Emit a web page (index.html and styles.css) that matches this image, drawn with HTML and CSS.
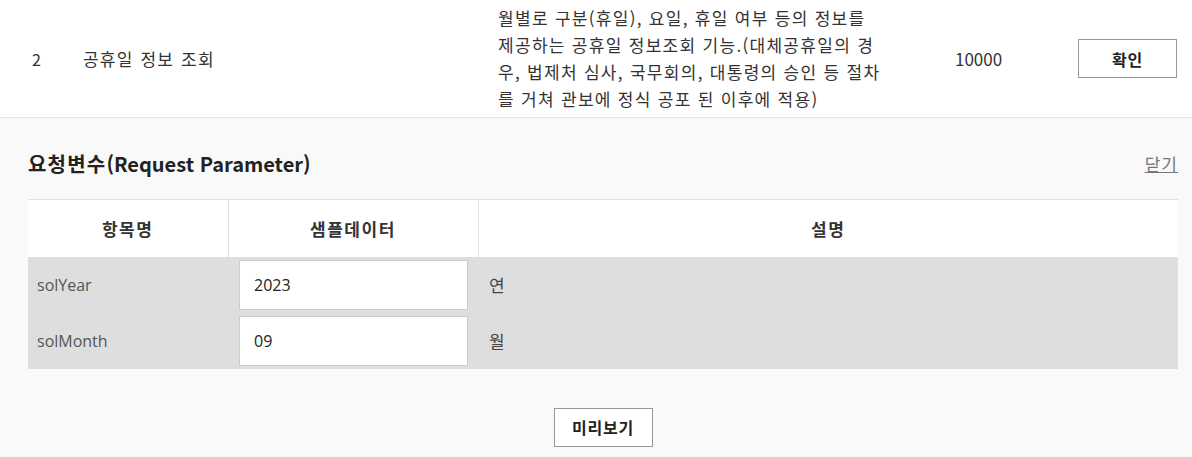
FILE: index.html
```html
<!DOCTYPE html>
<html lang="ko">
<head>
<meta charset="utf-8">
<title>공휴일 정보 조회</title>
<link rel="stylesheet" href="styles.css">
</head>
<body>
<div class="api-row">
  <div class="api-no">2</div>
  <div class="api-name">공휴일 정보 조회</div>
  <div class="api-desc">월별로 구분(휴일), 요일, 휴일 여부 등의 정보를<br>제공하는 공휴일 정보조회 기능.(대체공휴일의 경<br>우, 법제처 심사, 국무회의, 대통령의 승인 등 절차<br>를 거쳐 관보에 정식 공포 된 이후에 적용)</div>
  <div class="api-count">10000</div>
  <div class="api-action"><button class="btn">확인</button></div>
</div>
<section class="panel">
  <div class="panel-head">
    <h2 class="panel-title"><span class="ko">요청변수</span>(Request Parameter)</h2>
    <a class="panel-close" href="#">닫기</a>
  </div>
  <table class="param-table">
    <colgroup>
      <col class="c1"><col class="c2"><col class="c3">
    </colgroup>
    <thead>
      <tr><th>항목명</th><th>샘플데이터</th><th>설명</th></tr>
    </thead>
    <tbody>
      <tr>
        <td class="p-name">solYear</td>
        <td class="p-val"><input class="p-input" type="text" value="2023"></td>
        <td class="p-desc">연</td>
      </tr>
      <tr>
        <td class="p-name">solMonth</td>
        <td class="p-val"><input class="p-input" type="text" value="09"></td>
        <td class="p-desc">월</td>
      </tr>
    </tbody>
  </table>
  <div class="panel-foot"><button class="btn btn-wide">미리보기</button></div>
</section>
</body>
</html>
```
FILE: styles.css
```css
* { box-sizing: border-box; }
html, body { margin: 0; padding: 0; }
body {
  width: 1192px;
  height: 457px;
  overflow: hidden;
  background: #f9f9f9;
  font-family: "Noto Sans CJK KR", "Noto Sans", sans-serif;
  color: #333;
  font-size: 16px;
}
.api-row {
  display: grid;
  grid-template-columns: 51px 415px 457px 123px 99px;
  align-items: center;
  height: 118px;
  padding-left: 32px;
  background: #fff;
  border-bottom: 1px solid #e3e3e3;
}
.api-no { font-size: 16px; }
.api-count { font-size: 17px; }
.api-name {
  font-size: 17px;
  letter-spacing: 1.2px;
  word-spacing: 1px;
}
.api-desc {
  font-size: 17px;
  letter-spacing: 1.3px;
  line-height: 27px;
  white-space: nowrap;
  padding-bottom: 1px;
}
.btn {
  width: 99px;
  height: 39px;
  background: #fff;
  border: 1px solid #999;
  font-family: "Noto Sans CJK KR", "Noto Sans", sans-serif;
  font-size: 16px;
  font-weight: 700;
  letter-spacing: 0.8px;
  color: #222;
  padding: 0;
  cursor: pointer;
}
.panel {
  padding: 31px 14px 20px 28px;
}
.panel-head {
  display: flex;
  justify-content: space-between;
  align-items: center;
  height: 28px;
  margin-bottom: 22px;
}
.panel-title {
  margin: 0;
  font-size: 20px;
  font-weight: 700;
  color: #222;
}
.panel-title .ko { letter-spacing: 1.2px; }
.panel-close {
  font-size: 17px;
  letter-spacing: 1px;
  color: #777;
  text-decoration: underline;
  margin-right: 0;
}
.param-table {
  width: 1150px;
  border-collapse: collapse;
  table-layout: fixed;
}
.c1 { width: 200px; }
.c2 { width: 250px; }
.param-table th {
  height: 57px;
  background: #fff;
  border-top: 1px solid #e0e0e0;
  border-left: 1px solid #e0e0e0;
  font-size: 17px;
  font-weight: 700;
  letter-spacing: 1.6px;
  color: #333;
  text-align: center;
  padding: 0;
}
.param-table th:first-child { border-left: none; }
.param-table td {
  background: #dedede;
  padding: 3px 10px 3px;
  height: 56px;
  font-size: 16px;
  color: #555;
  vertical-align: middle;
}
.param-table td.p-name { padding-left: 9px; font-family: "Open Sans", "Noto Sans CJK KR", sans-serif; }
.param-table td.p-val { padding-left: 11px; }
.param-table td.p-desc { padding-left: 11px; color: #444; font-size: 17px; }
.p-input {
  display: block;
  width: 229px;
  height: 50px;
  border: 1px solid #ccc;
  background: #fff;
  padding: 0 14px;
  font-family: "Open Sans", "Noto Sans", sans-serif;
  font-size: 16px;
  color: #222;
  outline: none;
}
.panel-foot {
  display: flex;
  justify-content: center;
  margin-top: 39px;
}
```
